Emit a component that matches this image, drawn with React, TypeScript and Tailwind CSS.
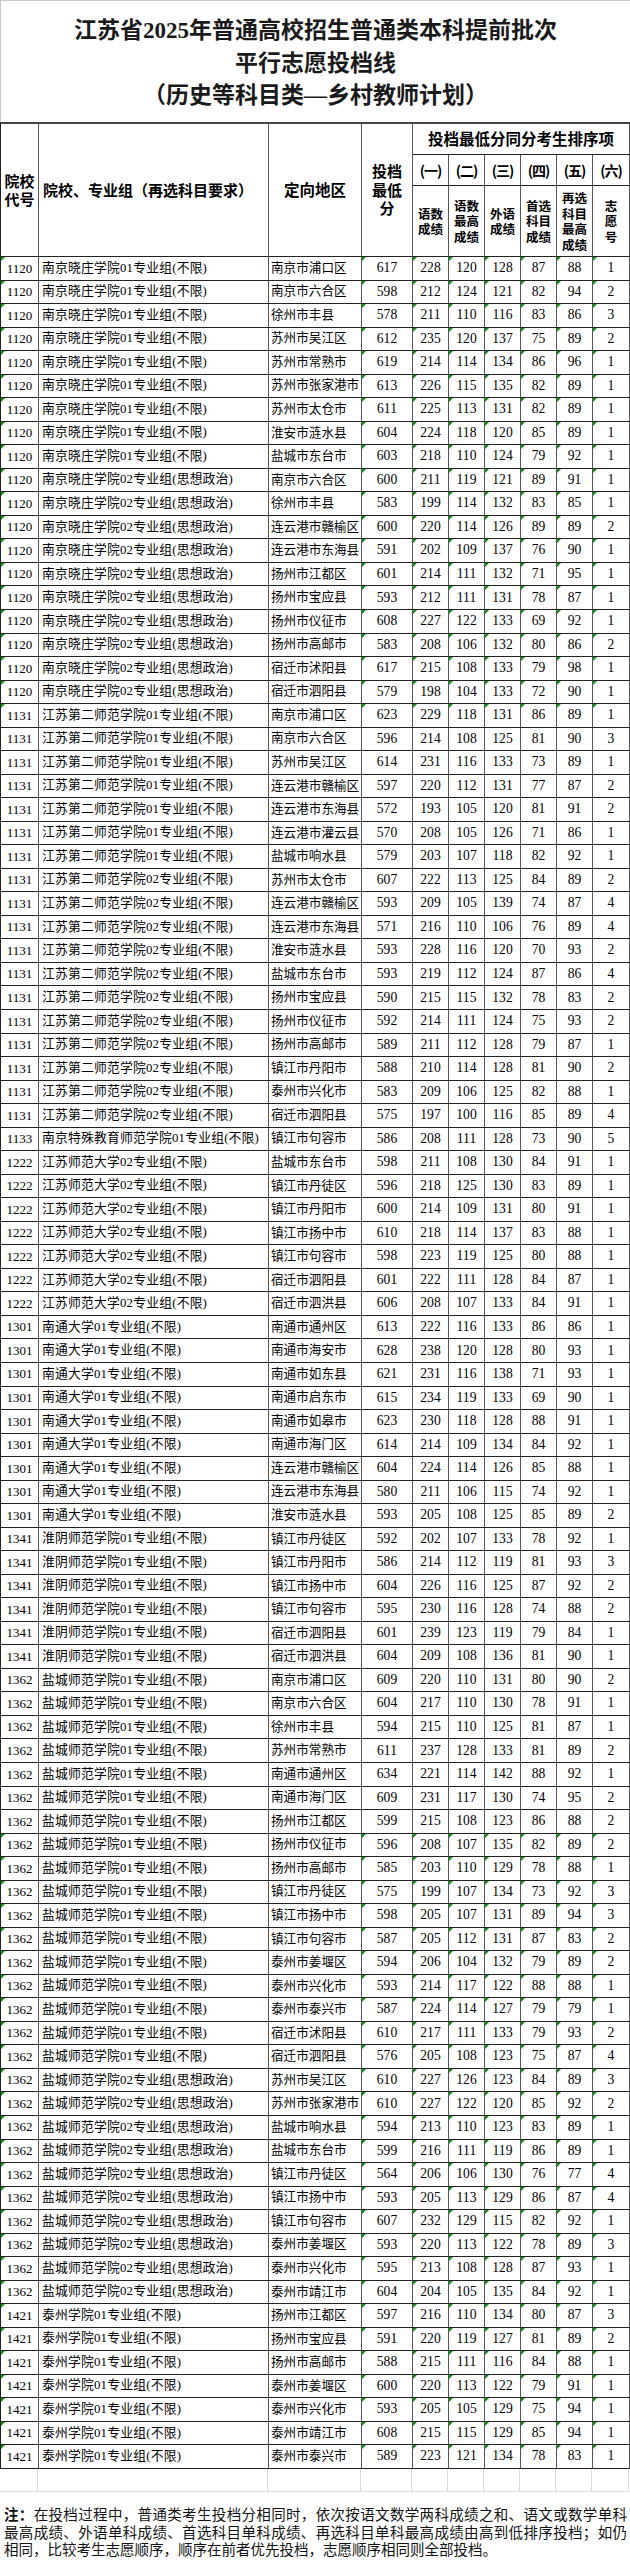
import React from 'react';

type Group = { code: string; name: string; items: string[] };

const groups: Group[] = [
  {
    code: '1120',
    name: '南京晓庄学院01专业组(不限)',
    items: [
      '南京市浦口区 617 228 120 128 87 88 1',
      '南京市六合区 598 212 124 121 82 94 2',
      '徐州市丰县 578 211 110 116 83 86 3',
      '苏州市吴江区 612 235 120 137 75 89 2',
      '苏州市常熟市 619 214 114 134 86 96 1',
      '苏州市张家港市 613 226 115 135 82 89 1',
      '苏州市太仓市 611 225 113 131 82 89 1',
      '淮安市涟水县 604 224 118 120 85 89 1',
      '盐城市东台市 603 218 110 124 79 92 1',
    ],
  },
  {
    code: '1120',
    name: '南京晓庄学院02专业组(思想政治)',
    items: [
      '南京市六合区 600 211 119 121 89 91 1',
      '徐州市丰县 583 199 114 132 83 85 1',
      '连云港市赣榆区 600 220 114 126 89 89 2',
      '连云港市东海县 591 202 109 137 76 90 1',
      '扬州市江都区 601 214 111 132 71 95 1',
      '扬州市宝应县 593 212 111 131 78 87 1',
      '扬州市仪征市 608 227 122 133 69 92 1',
      '扬州市高邮市 583 208 106 132 80 86 2',
      '宿迁市沭阳县 617 215 108 133 79 98 1',
      '宿迁市泗阳县 579 198 104 133 72 90 1',
    ],
  },
  {
    code: '1131',
    name: '江苏第二师范学院01专业组(不限)',
    items: [
      '南京市浦口区 623 229 118 131 86 89 1',
      '南京市六合区 596 214 108 125 81 90 3',
      '苏州市吴江区 614 231 116 133 73 89 1',
      '连云港市赣榆区 597 220 112 131 77 87 2',
      '连云港市东海县 572 193 105 120 81 91 2',
      '连云港市灌云县 570 208 105 126 71 86 1',
      '盐城市响水县 579 203 107 118 82 92 1',
    ],
  },
  {
    code: '1131',
    name: '江苏第二师范学院02专业组(不限)',
    items: [
      '苏州市太仓市 607 222 113 125 84 89 2',
      '连云港市赣榆区 593 209 105 139 74 87 4',
      '连云港市东海县 571 216 110 106 76 89 4',
      '淮安市涟水县 593 228 116 120 70 93 2',
      '盐城市东台市 593 219 112 124 87 86 4',
      '扬州市宝应县 590 215 115 132 78 83 2',
      '扬州市仪征市 592 214 111 124 75 93 2',
      '扬州市高邮市 589 211 112 128 79 87 1',
      '镇江市丹阳市 588 210 114 128 81 90 2',
      '泰州市兴化市 583 209 106 125 82 88 1',
      '宿迁市泗阳县 575 197 100 116 85 89 4',
    ],
  },
  {
    code: '1133',
    name: '南京特殊教育师范学院01专业组(不限)',
    items: ['镇江市句容市 586 208 111 128 73 90 5'],
  },
  {
    code: '1222',
    name: '江苏师范大学02专业组(不限)',
    items: [
      '盐城市东台市 598 211 108 130 84 91 1',
      '镇江市丹徒区 596 218 125 130 83 89 1',
      '镇江市丹阳市 600 214 109 131 80 91 1',
      '镇江市扬中市 610 218 114 137 83 88 1',
      '镇江市句容市 598 223 119 125 80 88 1',
      '宿迁市泗阳县 601 222 111 128 84 87 1',
      '宿迁市泗洪县 606 208 107 133 84 91 1',
    ],
  },
  {
    code: '1301',
    name: '南通大学01专业组(不限)',
    items: [
      '南通市通州区 613 222 116 133 86 86 1',
      '南通市海安市 628 238 120 128 80 93 1',
      '南通市如东县 621 231 116 138 71 93 1',
      '南通市启东市 615 234 119 133 69 90 1',
      '南通市如皋市 623 230 118 128 88 91 1',
      '南通市海门区 614 214 109 134 84 92 1',
      '连云港市赣榆区 604 224 114 126 85 88 1',
      '连云港市东海县 580 211 106 115 74 92 1',
      '淮安市涟水县 593 205 108 125 85 89 2',
    ],
  },
  {
    code: '1341',
    name: '淮阴师范学院01专业组(不限)',
    items: [
      '镇江市丹徒区 592 202 107 133 78 92 1',
      '镇江市丹阳市 586 214 112 119 81 93 3',
      '镇江市扬中市 604 226 116 125 87 92 2',
      '镇江市句容市 595 230 116 128 74 88 2',
      '宿迁市泗阳县 601 239 123 119 79 84 1',
      '宿迁市泗洪县 604 209 108 136 81 90 1',
    ],
  },
  {
    code: '1362',
    name: '盐城师范学院01专业组(不限)',
    items: [
      '南京市浦口区 609 220 110 131 80 90 2',
      '南京市六合区 604 217 110 130 78 91 1',
      '徐州市丰县 594 215 110 125 81 87 1',
      '苏州市常熟市 611 237 128 133 81 89 2',
      '南通市通州区 634 221 114 142 88 92 1',
      '南通市海门区 609 231 117 130 74 95 2',
      '扬州市江都区 599 215 108 123 86 88 2',
      '扬州市仪征市 596 208 107 135 82 89 2',
      '扬州市高邮市 585 203 110 129 78 88 1',
      '镇江市丹徒区 575 199 107 134 73 92 3',
      '镇江市扬中市 598 205 107 131 89 94 3',
      '镇江市句容市 587 205 112 131 87 83 2',
      '泰州市姜堰区 594 206 104 132 79 89 2',
      '泰州市兴化市 593 214 117 122 88 88 1',
      '泰州市泰兴市 587 224 114 127 79 79 1',
      '宿迁市沭阳县 610 217 111 133 79 93 2',
      '宿迁市泗阳县 576 205 108 123 75 87 4',
    ],
  },
  {
    code: '1362',
    name: '盐城师范学院02专业组(思想政治)',
    items: [
      '苏州市吴江区 610 227 126 123 84 89 3',
      '苏州市张家港市 610 227 122 120 85 92 2',
      '盐城市响水县 594 213 110 123 83 89 1',
      '盐城市东台市 599 216 111 119 86 89 1',
      '镇江市丹徒区 564 206 106 130 76 77 4',
      '镇江市扬中市 593 205 113 129 86 87 4',
      '镇江市句容市 607 232 129 115 82 92 1',
      '泰州市姜堰区 593 220 113 122 78 89 3',
      '泰州市兴化市 595 213 108 128 87 93 1',
      '泰州市靖江市 604 204 105 135 84 92 1',
    ],
  },
  {
    code: '1421',
    name: '泰州学院01专业组(不限)',
    items: [
      '扬州市江都区 597 216 110 134 80 87 3',
      '扬州市宝应县 591 220 119 127 81 89 2',
      '扬州市高邮市 588 215 111 116 84 88 1',
      '泰州市姜堰区 600 220 113 122 79 91 1',
      '泰州市兴化市 593 205 105 129 75 94 1',
      '泰州市靖江市 608 215 115 129 85 94 1',
      '泰州市泰兴市 589 223 121 134 78 83 1',
    ],
  },
];

const rows = groups.flatMap((g) =>
  g.items.map((line) => {
    const [area, ...nums] = line.split(' ');
    return { code: g.code, name: g.name, area, nums };
  })
);

// rows (0-based) whose number cells carry Excel's green "number stored as text" mark
const marked = (i: number) => i < 20 || i >= 67;

const grid =
  'grid grid-cols-[38px_230px_93px_51px_36px_36px_36px_36px_36px_37px]';
const cell = 'border-r border-b border-r-[#555] border-b-[#222]';

const subHeads = [
  ['语数', '成绩'],
  ['语数', '最高', '成绩'],
  ['外语', '成绩'],
  ['首选', '科目', '成绩'],
  ['再选', '科目', '最高', '成绩'],
  ['志', '愿', '号'],
];

function Mark() {
  return (
    <span className="absolute top-0 left-0 w-0 h-0 border-t-[4px] border-r-[4px] border-t-[#109010] border-r-transparent" />
  );
}

export default function App() {
  return (
    <div className="w-[630px] h-[2560px] bg-white text-black overflow-hidden font-['Liberation_Serif','Noto_Sans_CJK_SC',serif]">
      {/* Title */}
      <div className="h-[122px] border-t border-l border-[#c8c8c8] pt-[14px] text-center text-[23px] leading-[32.5px] font-bold text-[#1a1a1a]">
        <div>江苏省2025年普通高校招生普通类本科提前批次</div>
        <div>平行志愿投档线</div>
        <div>（历史等科目类—乡村教师计划）</div>
      </div>

      {/* Table header */}
      <div
        className={`${grid} grid-rows-[31px_31px_71px] border-t-2 border-l border-t-[#444] border-l-[#222] font-['Noto_Sans_CJK_SC',sans-serif] font-bold`}
      >
        <div className={`${cell} row-span-3 flex flex-col items-center justify-center text-[15px] leading-[18px]`}>
          <span>院校</span>
          <span>代号</span>
        </div>
        <div className={`${cell} row-span-3 flex items-center pl-[4px] text-[15px]`}>
          院校、专业组（再选科目要求）
        </div>
        <div className={`${cell} row-span-3 flex items-center justify-center text-[15.5px]`}>
          定向地区
        </div>
        <div className={`${cell} row-span-3 flex flex-col items-center justify-center text-[15px] leading-[18.5px]`}>
          <span>投档</span>
          <span>最低</span>
          <span>分</span>
        </div>
        <div className={`${cell} col-span-6 flex items-center justify-center text-[15.5px]`}>
          投档最低分同分考生排序项
        </div>
        {['一', '二', '三', '四', '五', '六'].map((n) => (
          <div key={n} className={`${cell} flex items-center justify-center text-[14px] tracking-[-1px]`}>
            ({n})
          </div>
        ))}
        {subHeads.map((lines, i) => (
          <div key={i} className={`${cell} flex flex-col items-center justify-center text-[12.5px] leading-[15.5px]`}>
            {lines.map((t, j) => (
              <span key={j}>{t}</span>
            ))}
          </div>
        ))}
      </div>

      {/* Table body */}
      <div className="border-l border-l-[#222]">
        {rows.map((r, i) => (
          <div key={i} className={`${grid} h-[23.54px]`}>
            <div className={`${cell} relative flex items-center justify-center text-[13px]`}>
              {marked(i) && <Mark />}
              {r.code}
            </div>
            <div className={`${cell} flex items-center pl-[3px] text-[12.8px] tracking-[0.2px] whitespace-nowrap overflow-hidden`}>
              {r.name}
            </div>
            <div className={`${cell} flex items-center pl-[2px] text-[12.6px] whitespace-nowrap`}>{r.area}</div>
            {r.nums.map((n, j) => (
              <div key={j} className={`${cell} relative flex items-center justify-center text-[13.6px]`}>
                {marked(i) && <Mark />}
                {n}
              </div>
            ))}
          </div>
        ))}
      </div>

      {/* Empty spreadsheet row */}
      <div className={`${grid} h-[23px]`}>
        {Array.from({ length: 10 }).map((_, i) => (
          <div key={i} className="border-r border-b border-[#dcdcdc]" />
        ))}
      </div>

      {/* Note */}
      <div className="pl-[4px] pr-[3px] pt-[13px] text-[14.5px] leading-[17.7px] font-['Noto_Sans_CJK_SC',sans-serif] text-[#111]">
        <div className="text-justify [text-align-last:justify]">
          <span className="font-bold">注：</span>在投档过程中，普通类考生投档分相同时，依次按语文数学两科成绩之和、语文或数学单科
        </div>
        <div className="text-justify [text-align-last:justify]">
          最高成绩、外语单科成绩、首选科目单科成绩、再选科目单科最高成绩由高到低排序投档；如仍
        </div>
        <div>相同，比较考生志愿顺序，顺序在前者优先投档，志愿顺序相同则全部投档。</div>
      </div>
    </div>
  );
}
